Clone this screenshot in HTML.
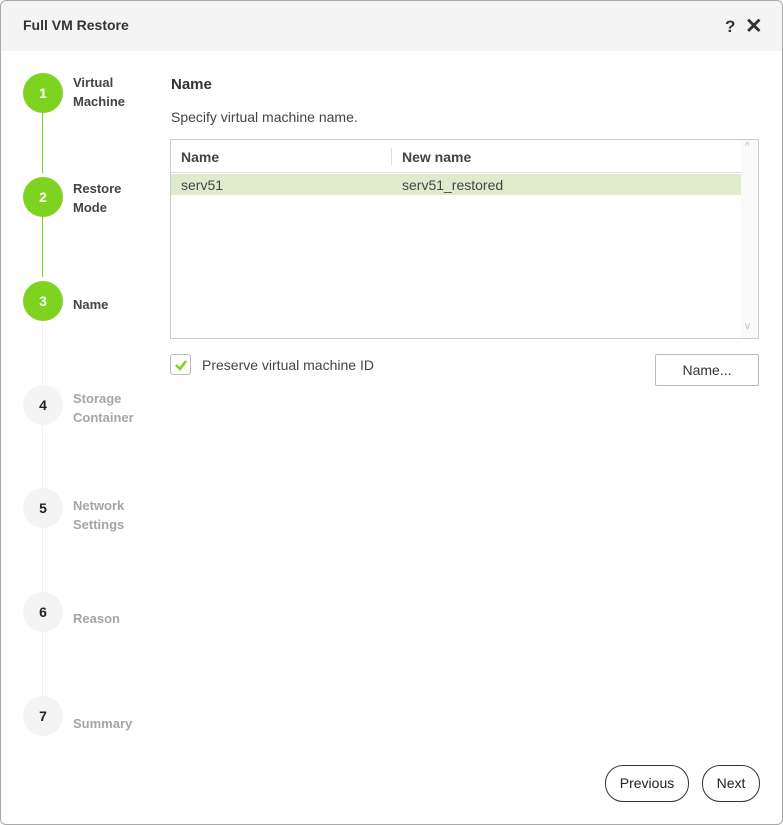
<!DOCTYPE html>
<html><head><meta charset="utf-8"><style>
*{box-sizing:border-box;margin:0;padding:0}
body{width:783px;height:825px;background:#fff;font-family:"Liberation Sans",sans-serif;color:#333;position:relative;overflow:hidden}
.frame{position:absolute;left:0;top:0;width:783px;height:825px;border:1px solid #a8a8a8;border-radius:6px}
.hdr{position:absolute;left:1px;top:1px;width:781px;height:50px;background:#f4f4f4;border-radius:6px 6px 0 0}
.title{position:absolute;left:23px;top:17px;font-size:14px;font-weight:bold;color:#333}
.q{position:absolute;left:725px;top:17px;font-size:17px;font-weight:bold}
.x{position:absolute;left:745px;top:14px;font-size:21px;font-weight:bold}
.c{position:absolute;left:23px;width:40px;height:40px;border-radius:50%;text-align:center;line-height:40px;font-size:14px;font-weight:bold}
.g{background:#7ed321;color:#fff}
.n{background:#f4f4f4;color:#222}
.l{position:absolute;left:42px;width:1px}
.lbl{position:absolute;left:73px;font-size:13px;font-weight:bold;line-height:19px}
.dk{color:#444}.lt{color:#a5a5a5}
.h{position:absolute;left:171px;top:76px;font-size:15px;font-weight:bold;color:#333}
.sub{position:absolute;left:171px;top:109px;font-size:14px;color:#444}
.tbl{position:absolute;left:170px;top:139px;width:589px;height:200px;border:1px solid #ccc}
.th{position:absolute;top:149px;font-size:14px;font-weight:bold;color:#444}
.sel{position:absolute;left:171px;top:174px;width:570px;height:21px;background:#e0ebcc}
.td{position:absolute;top:177px;font-size:14px;color:#444}
.btn{position:absolute;border:1px solid #bbb;background:#fff;font-size:14px;text-align:center;color:#333}
.rb{position:absolute;border:1px solid #333;border-radius:18px;background:#fff;font-size:14px;text-align:center;line-height:35px;color:#222}
</style></head><body>
<div class="frame"></div>
<div class="hdr"></div>
<div class="title">Full VM Restore</div>
<div class="q">?</div><div class="x">✕</div>

<div class="l" style="top:113px;height:60px;background:#7ed321"></div>
<div class="l" style="top:217px;height:60px;background:#7ed321"></div>
<div class="l" style="top:321px;height:64px;background:#eee"></div>
<div class="l" style="top:425px;height:64px;background:#eee"></div>
<div class="l" style="top:528px;height:64px;background:#eee"></div>
<div class="l" style="top:632px;height:64px;background:#eee"></div>

<div class="c g" style="top:73px">1</div>
<div class="c g" style="top:177px">2</div>
<div class="c g" style="top:281px">3</div>
<div class="c n" style="top:385px">4</div>
<div class="c n" style="top:488px">5</div>
<div class="c n" style="top:592px">6</div>
<div class="c n" style="top:696px">7</div>

<div class="lbl dk" style="top:73px">Virtual<br>Machine</div>
<div class="lbl dk" style="top:179px">Restore<br>Mode</div>
<div class="lbl dk" style="top:295px">Name</div>
<div class="lbl lt" style="top:389px">Storage<br>Container</div>
<div class="lbl lt" style="top:496px">Network<br>Settings</div>
<div class="lbl lt" style="top:609px">Reason</div>
<div class="lbl lt" style="top:714px">Summary</div>

<div class="h">Name</div>
<div class="sub">Specify virtual machine name.</div>
<div class="tbl"></div>
<div style="position:absolute;left:741px;top:140px;width:17px;height:198px;background:#fafafa"></div>
<div style="position:absolute;left:745px;top:141px;font-size:10px;color:#bbb">^</div>
<div style="position:absolute;left:745px;top:321px;font-size:10px;color:#bbb">v</div>
<div class="th" style="left:181px">Name</div>
<div style="position:absolute;left:391px;top:148px;width:1px;height:17px;background:#ddd"></div>
<div class="th" style="left:402px">New name</div>
<div style="position:absolute;left:171px;top:172px;width:570px;height:1px;background:#ddd"></div>
<div class="sel"></div>
<div class="td" style="left:181px">serv51</div>
<div class="td" style="left:402px">serv51_restored</div>

<div style="position:absolute;left:170px;top:354px;width:21px;height:21px;border:1px solid #bbb;border-radius:3px;background:#fff"></div>
<svg style="position:absolute;left:173px;top:357px" width="16" height="16"><path d="M3 8 L7 12 L13 4" stroke="#7ed321" stroke-width="2.5" fill="none"/></svg>
<div style="position:absolute;left:202px;top:357px;font-size:14px;color:#444">Preserve virtual machine ID</div>
<div class="btn" style="left:655px;top:354px;width:104px;height:32px;line-height:30px;border-radius:2px">Name...</div>

<div class="rb" style="left:605px;top:765px;width:84px;height:37px">Previous</div>
<div class="rb" style="left:702px;top:765px;width:58px;height:37px">Next</div>
</body></html>
